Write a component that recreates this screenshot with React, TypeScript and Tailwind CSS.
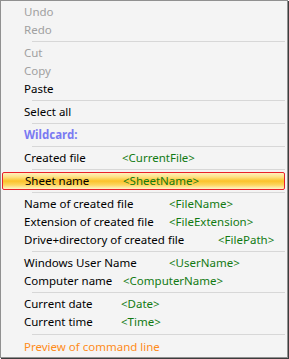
import React from 'react';

type Row =
    | { kind: 'sep'; tall?: boolean }
    | { kind: 'item'; label: string; tone?: 'off' | 'on' | 'head' | 'preview'; tag?: string; col?: string; active?: boolean };

const rows: Row[] = [
    { kind: 'item', label: 'Undo', tone: 'off' },
    { kind: 'item', label: 'Redo', tone: 'off' },
    { kind: 'sep' },
    { kind: 'item', label: 'Cut', tone: 'off' },
    { kind: 'item', label: 'Copy', tone: 'off' },
    { kind: 'item', label: 'Paste' },
    { kind: 'sep' },
    { kind: 'item', label: 'Select all' },
    { kind: 'sep' },
    { kind: 'item', label: 'Wildcard:', tone: 'head' },
    { kind: 'sep' },
    { kind: 'item', label: 'Created file', tag: '<CurrentFile>', col: 'w-[98px]' },
    { kind: 'sep' },
    { kind: 'item', label: 'Sheet name', tag: '<SheetName>', col: 'w-[98px]', active: true },
    { kind: 'sep' },
    { kind: 'item', label: 'Name of created file', tag: '<FileName>', col: 'w-[145px]' },
    { kind: 'item', label: 'Extension of created file', tag: '<FileExtension>', col: 'w-[145px]' },
    { kind: 'item', label: 'Drive+directory of created file', tag: '<FilePath>', col: 'w-[194px]' },
    { kind: 'sep' },
    { kind: 'item', label: 'Windows User Name', tag: '<UserName>', col: 'w-[145px]' },
    { kind: 'item', label: 'Computer name', tag: '<ComputerName>', col: 'w-[99px]' },
    { kind: 'sep' },
    { kind: 'item', label: 'Current date', tag: '<Date>', col: 'w-[97px]' },
    { kind: 'item', label: 'Current time', tag: '<Time>', col: 'w-[97px]' },
    { kind: 'sep', tall: true },
    { kind: 'item', label: 'Preview of command line', tone: 'preview' },
];

const toneClass = {
    off: 'text-[#a0a0a0]',
    on: 'text-black',
    head: 'text-[#7a7af2] font-bold',
    preview: 'text-[#ff8c1a]',
};

const App = () => {
    return (
        <div className="w-[289px] h-[359px] bg-white" style={{ fontFamily: '"Noto Sans", "Open Sans", sans-serif' }}>
            <div className="w-[288px] h-[358px] bg-[#f4f4f4] border border-[#909090] shadow-[1px_1px_0_#3c3c3c] pt-[2px] text-[11.5px] leading-[18px]">
                {rows.map((r, i) => {
                    if (r.kind === 'sep') {
                        return (
                            <div key={i} className={`${r.tall ? 'h-[7px]' : 'h-[5px]'} pl-[31px] pr-[2px] flex items-center`}>
                                <div className="h-px w-full bg-[#d7d7d7]" />
                            </div>
                        );
                    }
                    const label = (
                        <span className={`${r.col ?? ''} shrink-0 whitespace-nowrap ${toneClass[r.tone ?? 'on']}`}>{r.label}</span>
                    );
                    if (r.active) {
                        return (
                            <div key={i} className="h-[18px] ml-[1px] mr-[2px] flex items-center pl-[22px] rounded-[2px] border border-[#e8222a] bg-[linear-gradient(to_bottom,#fff0bd_0%,#fde184_25%,#fbc22a_50%,#fdd660_75%,#fff4c8_100%)]">
                                {label}
                                <span className="text-[#127a12] whitespace-nowrap">{r.tag}</span>
                            </div>
                        );
                    }
                    return (
                        <div key={i} className="h-[18px] flex items-center pl-[23px]">
                            {label}
                            {r.tag && <span className="text-[#127a12] whitespace-nowrap">{r.tag}</span>}
                        </div>
                    );
                })}
            </div>
        </div>
    );
};

export default App;
